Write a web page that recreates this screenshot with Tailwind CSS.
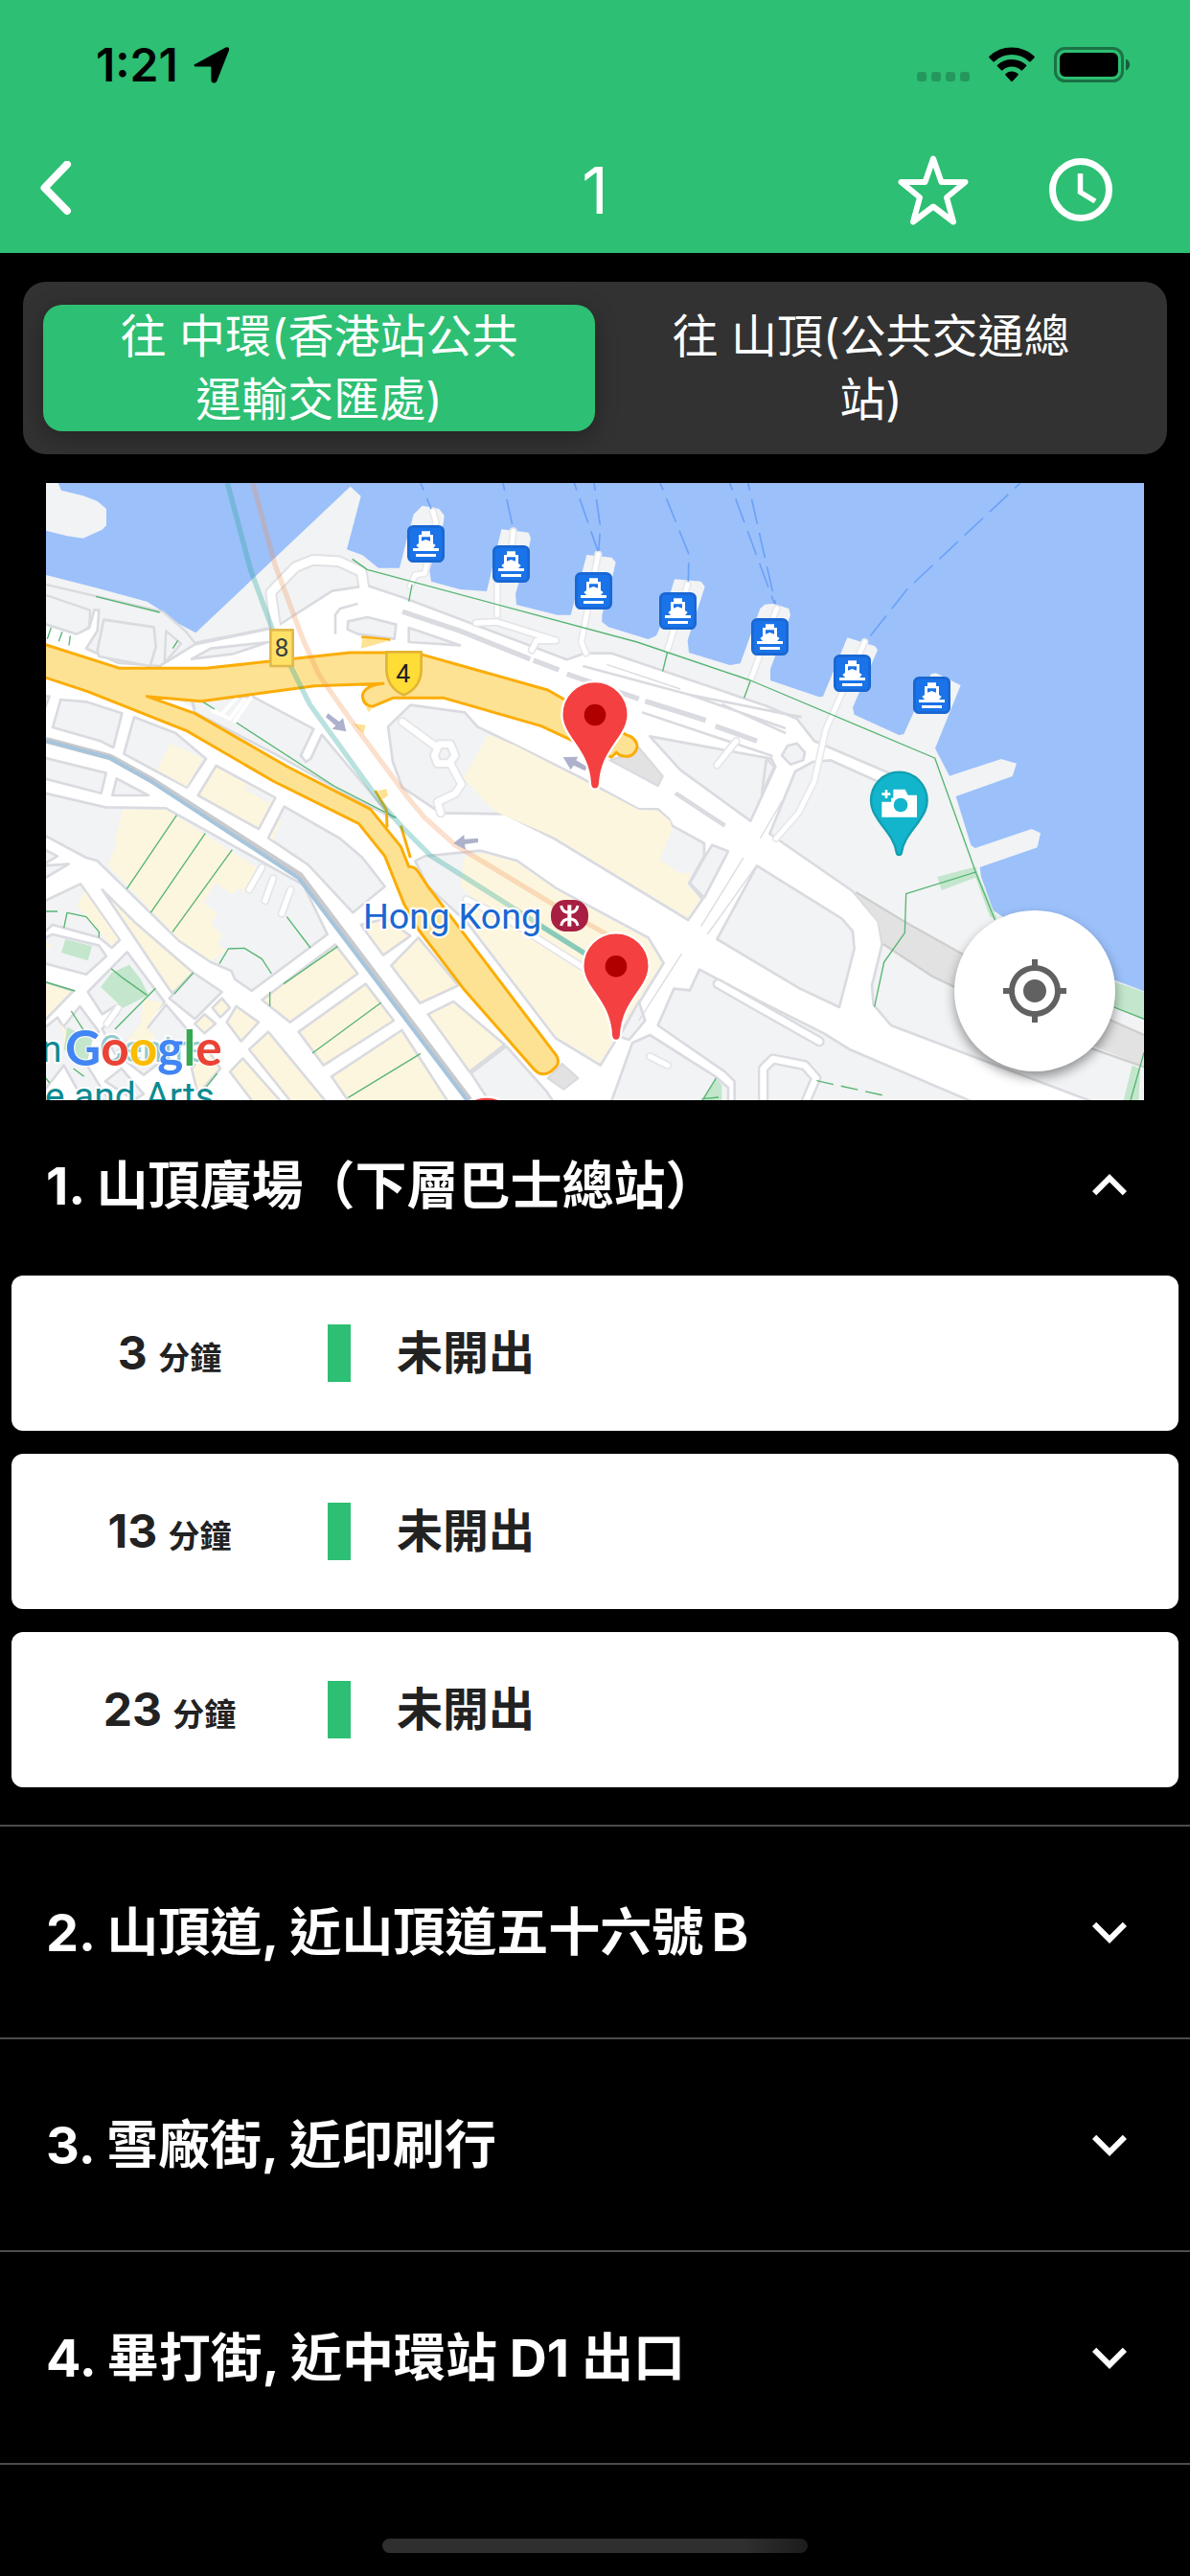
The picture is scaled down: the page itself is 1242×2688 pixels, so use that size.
<!DOCTYPE html>
<html lang="zh-HK">
<head>
  <meta charset="UTF-8" />
  <meta name="viewport" content="width=device-width, initial-scale=1.0"/>
  <title>1 - 往 中環(香港站公共運輸交匯處)</title>
  <script src="https://cdn.jsdelivr.net/npm/@tailwindcss/browser@4"></script>
</head>
<body class="bg-black text-white min-h-screen flex flex-col font-[Inter,'Noto_Sans_CJK_TC',sans-serif]">

  <header class="bg-[#2dbf73]">
    <!-- status bar -->
    <div class="h-[132px] pt-1 pl-[100px] pr-[62px] flex items-center justify-between text-black">
      <div class="flex items-center gap-4">
        <span class="text-[48px] leading-none font-semibold">1:21</span>
        <svg class="w-[38px] h-[38px]" viewBox="0 0 38 38" fill="currentColor"><path d="M2.500 17.500 33.500 .6c2.500-1.200 4.300.5 3.500 3L24.400 35.400c-1.400 3.300-6 2.600-6-1V21.500c0-.8-.4-1-1-1H3.500c-3.600 0-4-2-1-3z"/></svg>
      </div>
      <div class="flex items-center gap-5">
        <svg class="w-[55px] h-[38px]" viewBox="0 0 55 38" fill="#000" fill-opacity=".2">
          <rect x="0" y="26" width="10" height="10" rx="3"/>
          <rect x="15" y="26" width="10" height="10" rx="3"/>
          <rect x="30" y="26" width="10" height="10" rx="3"/>
          <rect x="45" y="26" width="10" height="10" rx="3"/>
        </svg>
        <svg class="w-[48px] h-[38px]" viewBox="0 0 48 38" fill="currentColor">
          <path d="M24 .5c9 0 17.300 3.400 23.500 9.200.5.500.5 1 .1 1.500l-4 4c-.5.5-1 .5-1.500 0A26.500 26.500 0 0 0 24 8 26.500 26.500 0 0 0 5.900 15.200c-.5.5-1 .5-1.500 0l-4-4c-.4-.5-.4-1 .1-1.500A34 34 0 0 1 24 .5z"/>
          <path d="M24 13c5.700 0 11 2.200 15 5.800.5.5.5 1 0 1.500l-4 4c-.5.5-1 .5-1.500 0a14 14 0 0 0-19 0c-.5.5-1 .5-1.500 0l-4-4c-.5-.5-.5-1 0-1.500A22.300 22.300 0 0 1 24 13z"/>
          <path d="M24 25.500c2.500 0 4.800.9 6.500 2.400.5.500.5 1 0 1.500l-5.700 6.300c-.5.600-1.100.6-1.600 0l-5.700-6.300c-.5-.5-.5-1 0-1.500a10 10 0 0 1 6.500-2.400z"/>
        </svg>
        <svg class="w-[80px] h-[38px]" viewBox="0 0 80 38">
          <rect x="1.500" y="1.500" width="70" height="34" rx="10" fill="none" stroke="#000" stroke-opacity=".4" stroke-width="3"/>
          <rect x="6" y="6" width="61" height="25" rx="6" fill="#000"/>
          <path d="M75 12.500c5.500 2 5.500 10 0 12z" fill="#000" fill-opacity=".5"/>
        </svg>
      </div>
    </div>

    <!-- nav bar -->
    <nav class="h-[132px] px-[18px] grid grid-cols-[1fr_auto_1fr] items-center">
      <button class="w-20 h-24 flex items-center justify-center" aria-label="返回">
        <svg class="w-[36px] h-[60px]" viewBox="0 0 36 60" fill="none" stroke="currentColor" stroke-width="8" stroke-linecap="round" stroke-linejoin="round"><path d="M30 3.500 6.500 28 30 52"/></svg>
      </button>
      <h1 class="text-[68px] leading-none">1</h1>
      <div class="flex items-center justify-end gap-[58px] pr-12">
        <button class="w-24 h-24 flex items-center justify-center" aria-label="收藏">
          <svg class="w-[76px] h-[76px]" viewBox="0 0 76 76" fill="none" stroke="currentColor" stroke-width="6" stroke-linejoin="round"><path d="M38 5.500 46.500 30H71.500L52 46l7 25.500L38 55.500 17 71.500 24 46 4.500 30H29.500Z"/></svg>
        </button>
        <button class="w-24 h-24 flex items-center justify-center" aria-label="時間表">
          <svg class="w-[68px] h-[68px]" viewBox="0 0 68 68" fill="none" stroke="currentColor"><circle cx="34" cy="34" r="29.500" stroke-width="7"/><path d="M33.500 17v19.500L49 46" stroke-width="5.500"/></svg>
        </button>
      </div>
    </nav>
  </header>

  <main class="flex-1">
    <!-- direction switch -->
    <div class="mt-[30px] mx-6 px-[21px] py-6 rounded-[24px] bg-[#323232] grid grid-cols-2">
      <button class="px-16 rounded-[20px] bg-[#2dbf73] shadow-[0_6px_24px_rgba(0,0,0,0.3)] text-[48px] leading-[66px]">往 中環(香港站公共運輸交匯處)</button>
      <button class="px-16 rounded-[20px] text-[48px] leading-[66px]">往 山頂(公共交通總站)</button>
    </div>

    <!-- map -->
    <div class="relative mt-[30px] mx-12">
      <svg class="block w-full h-auto" viewBox="24 27 3438 1932" font-family="Roboto, Inter, sans-serif" stroke-linejoin="round">
        <defs>
          <symbol id="ferry" viewBox="0 0 117 117" overflow="visible">
            <rect x="4" y="4" width="109" height="109" rx="15" fill="#1a73e8" stroke="#1967d2" stroke-width="8"/>
            <path fill="#fff" d="M45 19h27v11h9v27l8 6-11 13H40L28 63l8-6V30h9zM45 37v13l13-5 14 5V37z"/>
            <path fill="#fff" d="M18 72h81v9H18zM27 90h63v9H27z"/>
          </symbol>
          <g id="pin">
            <path d="M0 233c-10 0-14-6-15-16-4-70-34-106-62-147-16-23-27-46-27-71a104 104 0 0 1 208 0c0 25-11 48-27 71-28 41-58 77-62 147-1 10-5 16-15 16z" fill="#f44040" stroke="#fff" stroke-width="7"/>
            <circle r="34" fill="#b00000"/>
          </g>
        </defs>

        <!-- water, then land -->
        <path fill="#9cc0fa" d="M24 27H3462V1959H24z"/>
        <g fill="#f1f3f4">
          <path d="M24 27H62l10 23 68 17 45 17 28 24v52l-13 13-60 27-50-7-66-17z"/>
          <path d="M24 315 180 355 340 398 375 420 440 468 493 496 977 38 1010 68 966 235 1015 253 1065 293 1131 293 1152 210 1175 125 1202 98 1255 108 1271 128 1268 155 1225 300 1230 335 1320 360 1404 366 1450 172 1535 182 1542 200 1535 235 1494 375 1497 408 1625 440 1667 440 1717 252 1795 260 1808 275 1800 310 1765 440 1765 462 1785 478 1910 516 1935 505 1950 470 1992 328 2075 335 2087 352 2033 520 2037 558 2165 597 2198 592 2260 420 2275 407 2300 405 2350 420 2355 440 2292 610 2292 645 2445 697 2457 695 2533 511 2620 538 2628 550 2550 730 2555 752 2695 816 2710 813 2795 625 2810 622 2888 660 2808 858 2853 944 3015 891 3063 905 3050 945 2873 1008 2920 1160 2933 1170 3110 1110 3138 1123 3128 1168 2948 1230 2952 1260 2990 1365 3020 1385 3370 1583 3462 1618V1959H24z"/>
        </g>

        <!-- parks on the waterfront -->
        <g transform="translate(2280 960)" fill="#c3e6cc">
          <path d="M535 300 655 268 662 290 722 432 700 425 655 302 548 342zM1080 625 1182 660V745L1080 705zM1145 890l25 10-5 100h-47zM155 972l90 28h-95z"/>
        </g>

        <!-- coast side roads -->
        <g fill="none" stroke="#dadbe0" stroke-width="7">
          <path d="M24 345 390 430 460 490 490 527 730 480"/>
          <path d="M24 378 162 425 160 475 128 505"/>
          <path d="M400 490 447 530 395 590z"/>
        </g>
        <g fill="none" stroke="#e0e1e4" stroke-width="38"><path d="M745 490 728 370 805 290 860 268 940 272 1012 305 1022 370"/></g>
        <!-- road surface around the blocks -->
        <path fill="#fff" stroke="#dadbe0" stroke-width="8" d="M10 465 120 500 160 480 175 425 190 425 185 490 150 545 250 590 380 600 490 532 740 480 920 365 1030 348 1140 385 1655 580 1710 560 1795 560 2280 725 2375 765 2430 835 2700 950 2680 985 2480 895 2425 900 2370 930 2290 1125 2550 1305 2630 1400 2642 1470 2610 1600 2615 1660 2670 1725 3330 1975 10 1975z"/>
        <path fill="none" stroke="#fff" stroke-width="26" d="M745 490 728 370 805 290 860 268 940 272 1012 305 1022 370"/>

        <!-- city blocks -->
        <g fill="#f1f3f4" stroke="#dadbe0" stroke-width="8">
          <path d="M205 455 362 478 368 540 350 600 190 570 185 550z"/>
          <path d="M970 460 1030 447 1120 470 1115 515 1000 500 968 485z"/>
          <path d="M930 500V440L945 420 1000 405" fill="none"/>
          <path d="M480 578 540 545 720 525 610 562zM1160 480 1320 535 1160 525z"/>
          <path d="M70 705 150 712 262 748 235 855 195 835 45 792zM10 695H35L15 745z"/>
          <path d="M300 760 430 810 525 890 465 980 370 930 268 875z"/>
          <path d="M10 885 212 935 197 998 10 950zM245 952 345 1005H232z"/>
          <path d="M440 705 480 705 490 735M480 705 670 695 862 797 822 880 838 900 853 890 888 815 1060 1020 1110 1075 1000 1020 750 880 490 745z"/>
          <path d="M10 995 210 1042 400 1045 830 1285 905 1440 668 1617 615 1580 605 1555 540 1527 440 1460 185 1210 150 1200 10 1125z"/>
          <path d="M770 1040 945 1140 1015 1200 1085 1290 985 1372 845 1222 720 1138z"/>
          <path d="M10 1340 132 1282 255 1458 230 1482 190 1450 45 1410 10 1440zM10 1225 95 1220 10 1270zM10 1170 60 1195 10 1225z"/>
          <path d="M10 1455 45 1440 190 1475 213 1508 150 1565 10 1528z"/>
          <path d="M155 1620 278 1495 395 1652 240 1815 200 1735 250 1690 240 1665 200 1690z"/>
          <path d="M485 1560 575 1620 490 1705 410 1640z"/>
          <path d="M400 1660 485 1760 330 1880 265 1830zM130 1665 190 1745 110 1800 70 1740z"/>
          <path d="M10 1740 60 1700 220 1959 140 1959 80 1850 10 1940zM260 1860 330 1940 300 1959 210 1900z"/>
        </g>
        <g fill="#f1f3f4" stroke="#dadbe0" stroke-width="8" transform="translate(1140 0)">
          <path d="M-45 790 25 722 195 745 235 790 360 850 560 950 740 1048 800 1048 835 1080 845 1100 945 1155 945 1195 898 1280 940 1330 895 1395 475 1140 320 1063 120 1060 0 980-30 900z"/>
          <path d="M775 820 870 925 1090 1085 1168 915 1155 890z"/>
          <path d="M1140 890 1165 915 1125 1000z" />
          <path d="M1188 880 1205 850 1235 842 1260 870 1255 895 1215 908z"/>
          <path d="M70 1195 245 1178 360 1210 480 1295 770 1450 818 1530 620 1850 480 1765 200 1400 80 1290 40 1210z"/>
          <path d="M1110 1225 1375 1390 1410 1430 1415 1485 1368 1668 1245 1610 985 1455z"/>
          <path d="M930 1550 1120 1650 1320 1750 1400 1800 1810 1975 1040 1975V1900L1010 1870 800 1725 850 1610 900 1615z"/>
          <path d="M775 1755 980 1885 1020 1920V1975H650L720 1780z"/>
          <path d="M215 1875 325 1790 450 1930 480 1975H280z"/>
          <path d="M970 1160 1020 1180 945 1325 900 1280 948 1195z"/>
          <path d="M740 1650 760 1710 710 1770 680 1760z"/>
        </g>
        <g fill="none" stroke="#dadbe0" transform="translate(1140 0)">
          <path stroke-width="16" d="M0 430 180 490 400 578M410 582 490 612M515 625 740 703M760 710 950 770M980 788 1110 835"/>
          <path stroke-width="8" d="M565 600 900 690 1200 795M750 745 1160 882M900 690 1250 760M1000 720 1200 810"/>
          <path stroke-width="4" d="M640 595 870 672M1068 1200 935 1415M1105 1230 955 1440M875 1500 740 1710M1190 1020 1120 1140"/>
          <path stroke-width="14" d="M855 998 1010 1100"/>
        </g>
        <!-- built-up areas -->
        <g fill="#fdf6de">
          <path d="M415 842 515 890 465 978 372 925z"/>
          <path stroke="#dadbe0" stroke-width="8" d="M500 1005 557 912 742 1012 690 1110z"/>
          <path fill="#f1f3f4" d="M650 970 738 1014 720 1030 645 985z"/>
          <path d="M265 1050H400L690 1235 700 1260 655 1315 630 1295 605 1315 555 1278 517 1340 560 1375 540 1405 575 1445 560 1470 590 1490 540 1522 440 1455 218 1225 245 1155 240 1145z"/>
          <path d="M760 1085 735 1145 725 1138 755 1082zM145 1305 250 1455 230 1475 120 1350zM10 1450 45 1480 10 1490z"/>
          <path d="M330 1640 390 1655 320 1760 245 1810 320 1720zM330 1720 365 1760 330 1850 290 1830zM70 1720 130 1790 90 1820z"/>
          <g stroke="#dadbe0" stroke-width="8">
            <path d="M200 1300 300 1400 485 1560 420 1625 395 1590z"/>
            <path d="M700 1645 930 1472 1000 1563 788 1715 725 1665zM815 1745 1025 1595 1113 1710 893 1850zM918 1885 1138 1740 1290 1975H980z"/>
            <path d="M1010 1410 1090 1390 1165 1445 1080 1505zM1105 1538 1190 1450 1315 1600 1195 1655z"/>
            <path d="M1220 1690 1300 1650 1460 1785 1350 1870zM10 1585 110 1617 10 1720z"/>
            <path d="M660 1800 720 1745 910 1975H800zM600 1870 640 1828 770 1975H680zM590 1715 620 1665 690 1715 635 1775z"/>
            <path d="M490 1720 520 1690 555 1720 520 1750zM545 1670 575 1640 600 1670 570 1700zM480 1860 530 1800 570 1860 500 1940z"/>
          </g>
        </g>
        <g fill="#fdf6de" transform="translate(1140 0)">
          <path d="M270 815 355 850 740 1050 800 1052 838 1085 845 1110 805 1205 870 1250 900 1245 893 1285 933 1330 893 1388 475 1135 290 1055 190 950z"/>
          <path d="M190 1200 245 1184 360 1215 480 1300 765 1455 810 1530 618 1842 480 1758 230 1430 200 1380 240 1350 185 1290z"/>
        </g>
        <!-- inner streets -->
        <g fill="none" stroke-linecap="round">
          <path stroke="#e4e5e8" stroke-width="30" d="M1140 775 1245 852M1290 905 1325 970 1305 1000 1250 1025 1260 1060"/>
          <path stroke="#e4e5e8" stroke-width="32" d="M1255 845H1290L1305 880 1285 905H1250L1240 880z"/>
          <path stroke="#fff" stroke-width="20" d="M1140 775 1245 852M1290 905 1325 970 1305 1000 1250 1025 1260 1060M1255 845H1290L1305 880 1285 905H1250L1240 880z"/>
          <path stroke="#dadbe0" stroke-width="34" d="M2128 1595 2445 1775M2270 1959V1860L2300 1830 2400 1850 2435 1890 2405 1959"/>
          <path stroke="#fff" stroke-width="20" d="M2128 1595 2445 1775M2270 1959V1860L2300 1830 2400 1850 2435 1890 2405 1959"/>
          <path stroke="#e4e5e8" stroke-width="26" d="M1340 1330 1480 1400 1700 1540M1915 1822 1970 1850M700 1230 660 1300M735 1265 710 1335M790 1300 762 1375M2125 910 2185 835M1370 465 1435 462 1620 520 1560 520 1545 550M215 1720 250 1670"/>
          <path stroke="#fff" stroke-width="16" d="M1340 1330 1480 1400 1700 1540M1915 1822 1970 1850M700 1230 660 1300M735 1265 710 1335M790 1300 762 1375M2125 910 2185 835M1370 465 1435 462 1620 520 1560 520 1545 550M215 1720 250 1670"/>
          <path stroke="#e8e8ea" stroke-width="24" d="M1235 115 1245 150 1210 310 1180 315 1165 350M1487 178 1480 260 1437 345V440M1753 250 1700 525 1715 560M2033 345 1970 550M2312 420 2230 645M2587 525 2465 800 2430 960 2380 1060 2310 1140"/>
          <path stroke="#fff" stroke-width="14" d="M1235 115 1245 150 1210 310 1180 315 1165 350M1487 178 1480 260 1437 345V440M1753 250 1700 525 1715 560M2033 345 1970 550M2312 420 2230 645M2587 525 2465 800 2430 960 2380 1060 2310 1140"/>
          <path stroke="#fff" stroke-width="12" d="M545 740 590 760M575 750 620 700M600 765 645 705M615 772 665 700"/>
        </g>
        <!-- tunnels -->
        <g fill="#e2e2e2" stroke="#cfcfd0" stroke-width="7">
          <path stroke="#dadbe0" d="M1880 855 1955 945 1940 975 1790 895 1850 875zM1640 1845 1690 1890 1645 1925 1595 1890z"/>
          <path stroke="none" d="M2560 1308 2890 1500 3462 1755V1855L2880 1610 2800 1572 2645 1470 2630 1400z"/>
          <path fill="none" d="M2560 1308 2720 1405 2900 1505 3462 1755M2645 1470 2800 1572 2880 1610 3300 1798 3462 1855"/>
        </g>
        <path fill="#c3e6cc" d="M85 1455 168 1477 155 1522 72 1497zM285 1535 320 1580 345 1630 265 1670 195 1605 230 1560zM90 1730 170 1770 150 1850 80 1800zM2120 1890 2140 1910V1959H2075z"/>

        <!-- footpaths -->
        <g fill="none" stroke="#57b573" stroke-width="4">
          <path d="M180 382 380 432M983 265 1030 298 1875 525 2230 645 2807 888 2935 1245 2995 1395M1170 345 1160 398M1970 555 1955 617M2230 645 2210 700"/>
          <path d="M40 480 28 515M75 493 64 523M100 505 96 535M437 520 421 545"/>
          <path d="M515 712 552 735M620 777 925 975 1120 1075"/>
          <path d="M433 1067 277 1298M523 1123 352 1372M607 1175 420 1433M778 1385 852 1482M567 1532 595 1485 645 1483 700 1517 730 1563M768 1595 937 1478M725 1665V1620M425 1627 485 1560M367 1609 240 1737M228 1547 265 1577 340 1630M1073 1654 858 1812M1197 1813 970 1951M24 1590 115 1617M24 1368H60M80 1420 90 1372 150 1385 190 1432V1450M103 1680 145 1745M560 1875 520 1925M110 1860 143 1885M24 1890 35 1905"/>
          <path d="M2935 1245 2717 1313 2713 1435 2648 1527 2618 1667M3368 1668 3462 1705M3462 1810 3420 1959M2122 1890 2080 1959M2078 1955 2130 1950"/>
          <path stroke-dasharray="54 24" d="M2437 1898 2650 1945"/>
        </g>

        <!-- ferry routes -->
        <path fill="none" stroke="#6ba2f6" stroke-width="5" stroke-dasharray="80 28" stroke-dashoffset="56" d="M1197 27 1230 108M1455 27 1487 170M1678 27 1752 240M1740 27 1760 165 1754 240M1947 27 2037 250 2035 335M2165 27 2305 405M2222 27 2308 405M3075 27 2720 360 2590 525"/>

        <!-- railway -->
        <path fill="none" stroke="#c8cacd" stroke-width="20" d="M24 832 225 885 360 960 820 1256 1350 1959"/>
        <path fill="none" stroke="#a6c5dc" stroke-width="12" d="M24 834 225 888 358 964 815 1264 1345 1963"/>

        <!-- route 4 -->
        <path fill="#fde293" stroke="#fbad07" stroke-width="9" d="M10 529 255 607H525L975 558 1090 558 1205 565 1595 675 1840 815Q1875 825 1875 855 1865 885 1840 883 1815 880 1810 870L1795 885 1665 830 1575 788 1270 700H1110L1045 727Q1015 722 1015 690 1025 660 1080 655L865 662 510 710 340 695 490 748 780 915 1040 1048 1135 1165 1160 1228Q1180 1228 1190 1245L1220 1290 1615 1810Q1640 1840 1615 1860 1580 1895 1550 1860L1335 1615 1190 1425 1145 1345 1085 1195 1003 1093 735 960 465 803 155 680 10 632z"/>
        <path fill="none" stroke="#fbad07" stroke-width="9" d="M1055 990 1090 1050 1092 1105M1135 1100 1165 1200M1012 509 1102 518"/>
        <path fill="#fde293" d="M1015 512 1102 520 1010 545zM985 780 1025 785 1018 812zM1065 990 1090 985 1095 1005 1075 1020zM1025 728 1045 730 1035 745z"/>

        <!-- MTR lines -->
        <g fill="none" stroke-width="16">
          <path stroke="#26a69a" stroke-opacity=".32" d="M592 27 665 300 735 490 850 720 1070 1025 1140 1105 1230 1195 1460 1340 1720 1505"/>
          <path stroke="#26a69a" stroke-opacity=".32" d="M1570 1412 1720 1505"/>
          <path stroke="#f19150" stroke-opacity=".28" d="M672 27 740 280 830 520 880 630 1000 800 1160 1015 1210 1075 1305 1160 1610 1345 1780 1440"/>
        </g>

        <!-- one way arrows -->
        <path fill="#adb1cb" d="M907 748 942 774 954 763 964 805 920 797 931 787 900 760zM1300 1155 1333 1128 1334 1142 1377 1139V1152L1335 1158 1338 1175zM1643 885 1690 884 1684 895 1718 915 1712 928 1676 911 1667 925z"/>

        <!-- ferry piers -->
        <use href="#ferry" x="1155" y="159" width="117" height="117"/>
        <use href="#ferry" x="1422" y="222" width="117" height="117"/>
        <use href="#ferry" x="1680" y="306" width="117" height="117"/>
        <use href="#ferry" x="1944" y="369" width="117" height="117"/>
        <use href="#ferry" x="2232" y="450" width="117" height="117"/>
        <use href="#ferry" x="2490" y="564" width="117" height="117"/>
        <use href="#ferry" x="2739" y="633" width="117" height="117"/>

        <!-- road shields -->
        <rect x="727" y="487" width="70" height="113" fill="#ffe168" stroke="#e2b84c" stroke-width="8"/>
        <text x="762" y="570" font-size="80" text-anchor="middle" fill="#3c4043">8</text>
        <path fill="#ffdc36" stroke="#e2b534" stroke-width="8" d="M1090 556H1199V615Q1195 670 1144 691 1095 670 1090 615z"/>
        <text x="1142" y="650" font-size="80" text-anchor="middle" fill="#202124">4</text>

        <!-- place labels -->
        <g stroke="#fff" stroke-width="14" paint-order="stroke" stroke-opacity=".85">
          <text x="1017" y="1423" font-size="113" fill="#1967d2">Hong Kong</text>
          <text x="10" y="1838" font-size="115" fill="#0c8a92">n</text>
          <text x="190" y="1838" font-size="115" fill="#0c8a92" fill-opacity=".45">Centre</text>
          <text x="20" y="1985" font-size="117" fill="#0c8a92">e and Arts</text>
        </g>
        <rect x="1605" y="1332" width="117" height="99" rx="46" fill="#a71f42"/>
        <path fill="none" stroke="#fff" stroke-width="9" d="M1637 1350Q1640 1371 1663 1372 1686 1371 1689 1350M1637 1413Q1640 1392 1663 1391 1686 1392 1689 1413"/>
        <path fill="#fff" d="M1657 1348h12v67h-12z"/>

        <text x="84" y="1850" font-size="154" font-weight="700" font-family="Lato, sans-serif" stroke="#fff" stroke-width="8" stroke-opacity=".7" paint-order="stroke"><tspan fill="#4285f4">G</tspan><tspan fill="#ea4335">o</tspan><tspan fill="#fbbc04">o</tspan><tspan fill="#4285f4">g</tspan><tspan fill="#34a853">l</tspan><tspan fill="#ea4335">e</tspan></text>

        <!-- viewpoint -->
        <path fill="#12b5cb" stroke="#129eaf" stroke-width="7" d="M2695 1191q-7 0-8-8c-6-40-33-66-54-97-16-23-26-40-26-66a88 88 0 0 1 176 0c0 26-10 43-26 66-21 31-48 57-54 97q-1 8-8 8z"/>
        <path fill="#fff" d="M2641 1025h29v-12h7v-27h37l9 18h28v69h-110zM2651 988h8v9h9v8h-9v9h-8v-9h-10v-8h10z"/>
        <circle cx="2700" cy="1035" r="22" fill="#12b5cb"/>

        <!-- stops -->
        <use href="#pin" x="1743" y="753"/>
        <use href="#pin" x="1809" y="1540"/>
        <use href="#pin" x="1403" y="2054"/>
      </svg>
      <button class="absolute right-[30px] bottom-[30px] size-[168px] rounded-full bg-white shadow-[0_6px_12px_rgba(0,0,0,0.4)] flex items-center justify-center text-[#616161]" aria-label="我的位置">
        <svg class="size-18" viewBox="0 0 24 24" fill="currentColor"><path d="M12 8c-2.210 0-4 1.790-4 4s1.790 4 4 4 4-1.790 4-4-1.790-4-4-4zm8.940 3c-.46-4.170-3.770-7.480-7.940-7.940V1h-2v2.060C6.830 3.520 3.520 6.830 3.060 11H1v2h2.060c.46 4.170 3.770 7.480 7.940 7.940V23h2v-2.060c4.170-.46 7.480-3.770 7.940-7.940H23v-2h-2.060zM12 19c-3.870 0-7-3.130-7-7s3.130-7 7-7 7 3.130 7 7-3.130 7-7 7z"/></svg>
      </button>
    </div>

    <!-- stops -->
    <section class="border-b-2 border-[#4d4d4d]">
      <button class="w-full h-[178px] px-12 flex items-center justify-between text-[54px] font-bold" aria-expanded="true">
        <span>1. 山頂廣場（下層巴士總站）</span>
        <svg class="size-18" viewBox="0 0 24 24" fill="currentColor"><path d="M12 8l-6 6 1.410 1.410L12 10.830l4.590 4.580L18 14z"/></svg>
      </button>
      <ul class="px-3 pt-[5px] pb-[39px] flex flex-col gap-6 text-[#222]">
        <li class="h-[162px] rounded-xl bg-white flex items-center text-[48px] font-bold">
          <p class="w-[330px] text-center">3 <span class="text-[33px]">分鐘</span></p>
          <span class="w-6 h-15 mr-12 bg-[#2dbf73]"></span>
          <p>未開出</p>
        </li>
        <li class="h-[162px] rounded-xl bg-white flex items-center text-[48px] font-bold">
          <p class="w-[330px] text-center">13 <span class="text-[33px]">分鐘</span></p>
          <span class="w-6 h-15 mr-12 bg-[#2dbf73]"></span>
          <p>未開出</p>
        </li>
        <li class="h-[162px] rounded-xl bg-white flex items-center text-[48px] font-bold">
          <p class="w-[330px] text-center">23 <span class="text-[33px]">分鐘</span></p>
          <span class="w-6 h-15 mr-12 bg-[#2dbf73]"></span>
          <p>未開出</p>
        </li>
      </ul>
    </section>
    <section class="border-b-2 border-[#4d4d4d]">
      <button class="w-full h-[220px] px-12 flex items-center justify-between text-[54px] font-bold" aria-expanded="false">
        <span>2. 山頂道, 近山頂道五十六號Ｂ</span>
        <svg class="size-18" viewBox="0 0 24 24" fill="currentColor"><path d="M7.410 8.590L12 13.170l4.590-4.580L18 10l-6 6-6-6z"/></svg>
      </button>
    </section>
    <section class="border-b-2 border-[#4d4d4d]">
      <button class="w-full h-[220px] px-12 flex items-center justify-between text-[54px] font-bold" aria-expanded="false">
        <span>3. 雪廠街, 近印刷行</span>
        <svg class="size-18" viewBox="0 0 24 24" fill="currentColor"><path d="M7.410 8.590L12 13.170l4.590-4.580L18 10l-6 6-6-6z"/></svg>
      </button>
    </section>
    <section class="border-b-2 border-[#4d4d4d]">
      <button class="w-full h-[220px] px-12 flex items-center justify-between text-[54px] font-bold" aria-expanded="false">
        <span>4. 畢打街, 近中環站 D1 出口</span>
        <svg class="size-18" viewBox="0 0 24 24" fill="currentColor"><path d="M7.410 8.590L12 13.170l4.590-4.580L18 10l-6 6-6-6z"/></svg>
      </button>
    </section>
  </main>

  <!-- home indicator -->
  <footer class="pb-6 flex justify-center">
    <div class="w-[444px] h-[15px] rounded-full bg-linear-to-r from-[#2f2f2f] from-85% to-[#1c1c1c]"></div>
  </footer>
</body>
</html>
